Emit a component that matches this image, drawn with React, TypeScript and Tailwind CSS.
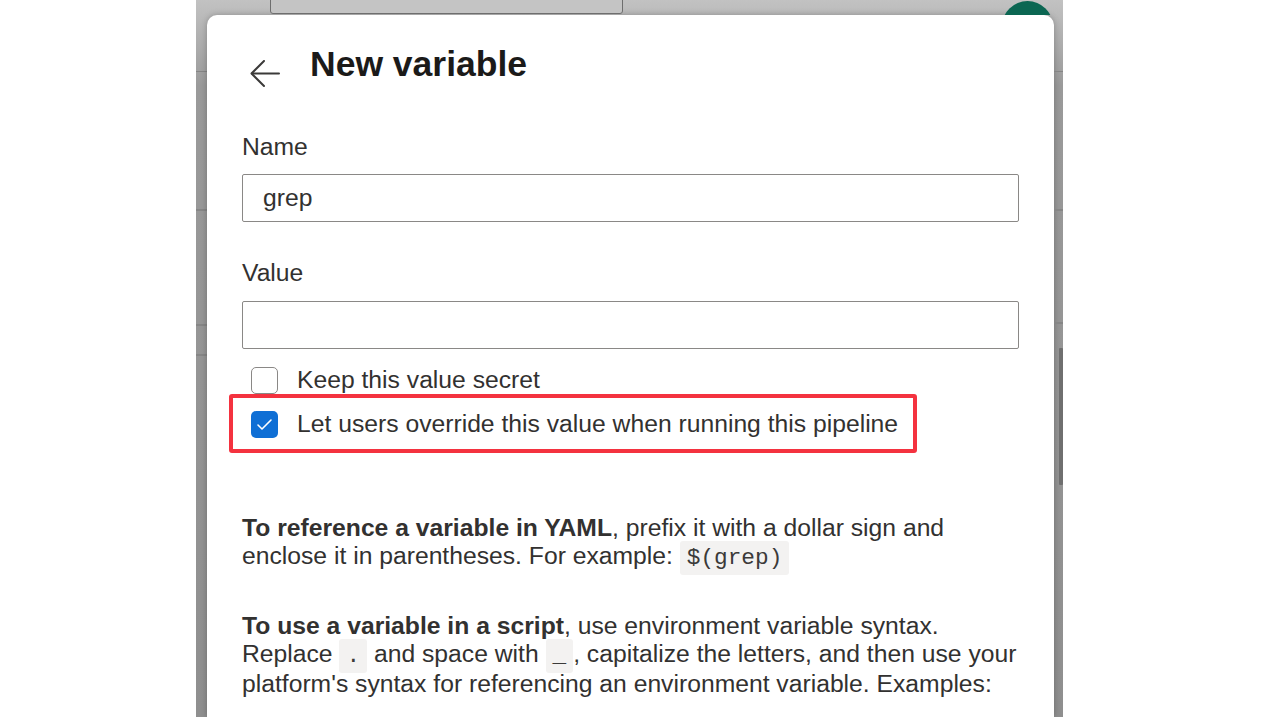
import React from "react";

const sans = { fontFamily: '"Liberation Sans", Arial, sans-serif' } as const;

function Code({ children }: { children: React.ReactNode }) {
  return (
    <code className="bg-[#f3f2f1] text-[#3b3a39] rounded-[3px] px-[7px] py-[4px] text-[22.75px] [font-family:'Liberation_Mono',monospace]">
      {children}
    </code>
  );
}

export default function App() {
  return (
    <div className="w-[1280px] h-[720px] bg-white overflow-hidden" style={sans}>
      <div className="ml-[196px] w-[867px] h-[717px] flex flex-col bg-gradient-to-b from-[#c2c2c2] via-[#9a9a9a] via-[12%] to-[#8f8f8f] overflow-hidden">
        {/* top dimmed strip */}
        <div className="relative h-[15px] shrink-0 overflow-hidden">
          <div className="absolute left-[74px] top-[-20px] w-[353px] h-[34px] border-[1.5px] border-[#6e6e6e] rounded-[3px] bg-[#c4c4c4]" />
          <div className="absolute left-[806px] top-[1px] w-[51px] h-[51px] rounded-full bg-[#0b6652]" />
        </div>
        <div className="flex flex-1 min-h-0">
          {/* left dimmed strip */}
          <div className="w-[11px] shrink-0 flex flex-col">
            <div className="h-[56px]" />
            <div className="h-[1px] bg-[#858585]" />
            <div className="h-[137px]" />
            <div className="h-[2px] bg-[#868686]" />
            <div className="h-[113px]" />
            <div className="h-[2px] bg-[#868686]" />
            <div className="h-[28px]" />
            <div className="h-[2px] bg-[#868686]" />
          </div>
          {/* panel */}
          <div className="w-[847px] shrink-0 bg-white rounded-t-[10px] shadow-[0_0_6px_rgba(0,0,0,0.25)] px-[35px] pt-[28px] text-[#323130]">
            <div className="flex items-start">
              <svg className="ml-[8px] mt-[17px] shrink-0" width="30" height="28" viewBox="0 0 30 28" fill="none" stroke="#3b3a39" strokeWidth="2" strokeLinecap="round" strokeLinejoin="round">
                <path d="M29 13.5H2" />
                <path d="M14 1L1.5 13.5L14 26" />
              </svg>
              <h1 className="ml-[30px] text-[35.5px] leading-[42px] font-bold text-[#1b1a19]">New variable</h1>
            </div>

            <div className="mt-[45px] text-[24.7px] leading-[28px]">Name</div>
            <div className="mt-[13px] h-[48px] border-[1.75px] border-[#8a8886] rounded-[2px] flex items-center pl-[20px] text-[24.7px]">
              grep
            </div>

            <div className="mt-[37px] text-[24.7px] leading-[28px]">Value</div>
            <div className="mt-[14px] h-[48px] border-[1.75px] border-[#8a8886] rounded-[2px]" />

            <div className="mt-[9px] h-[44px] flex items-center">
              <div className="ml-[9px] w-[27px] h-[27px] rounded-[5px] border-[1.75px] border-[#8a8886] bg-white shrink-0" />
              <span className="ml-[19px] text-[24.7px] leading-[28px]">Keep this value secret</span>
            </div>
            <div className="relative h-[44px] flex items-center">
              <div className="ml-[9px] w-[27px] h-[27px] rounded-[5px] bg-[#0f6fd5] shrink-0 flex items-center justify-center">
                <svg width="17" height="13" viewBox="0 0 17 13" fill="none" stroke="white" strokeWidth="1.6" strokeLinecap="round" strokeLinejoin="round">
                  <path d="M2 7L6 11L15 2" />
                </svg>
              </div>
              <span className="ml-[19px] text-[24.7px] leading-[28px]">Let users override this value when running this pipeline</span>
              <div className="absolute left-[-13px] top-[-8px] w-[688px] h-[59px] border-[4px] border-[#f4323f] rounded-[3px]" />
            </div>

            <p className="mt-[68px] w-[782px] text-[24.7px] leading-[28px]">
              <b className="font-bold">To reference a variable in YAML</b>, prefix it with a dollar sign and enclose it in parentheses. For example: <Code>$(grep)</Code>
            </p>

            <p className="mt-[40px] w-[782px] text-[24.7px] leading-[28px]">
              <b className="font-bold">To use a variable in a script</b>, use environment variable syntax. Replace <Code>.</Code> and space with <Code>_</Code>, capitalize the letters, and then use your platform's syntax for referencing an environment variable. Examples:
            </p>
          </div>
          {/* right dimmed strip */}
          <div className="w-[9px] shrink-0 flex flex-col">
            <div className="h-[56px]" />
            <div className="h-[1px] bg-[#858585]" />
            <div className="h-[137px]" />
            <div className="h-[2px] bg-[#868686]" />
            <div className="h-[111px]" />
            <div className="h-[2px] bg-[#868686]" />
            <div className="h-[24px]" />
            <div className="ml-[5px] w-[4px] h-[137px] bg-[#6f6f6f] rounded-[1px]" />
          </div>
        </div>
      </div>
    </div>
  );
}
